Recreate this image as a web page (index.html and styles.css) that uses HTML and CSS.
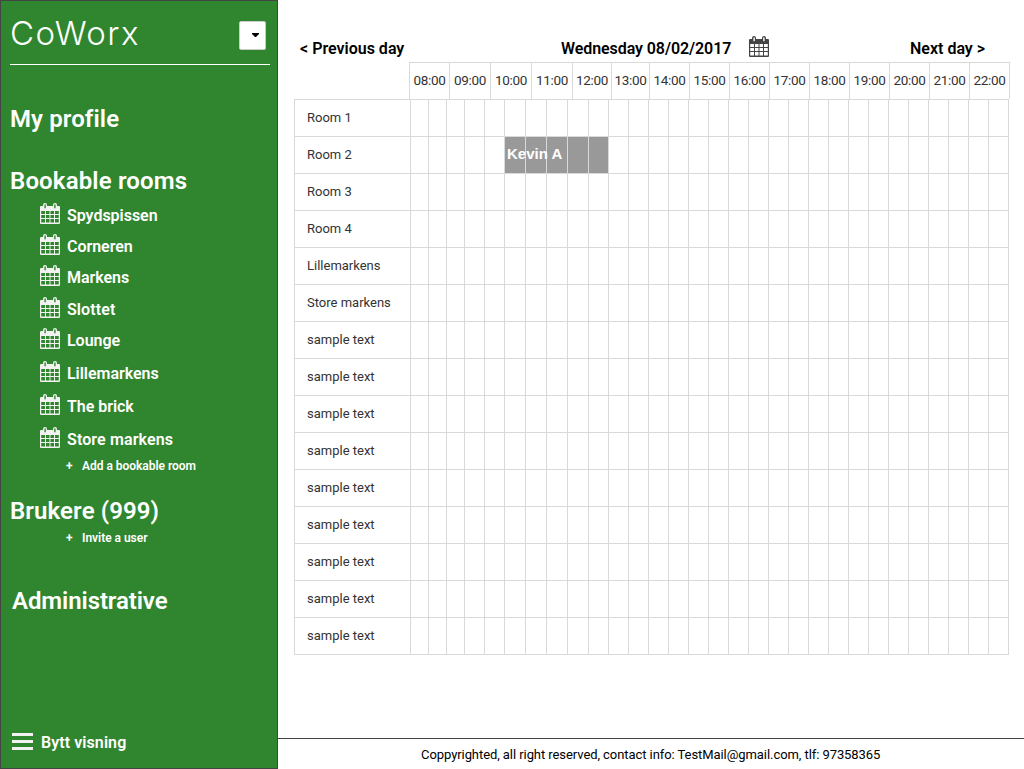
FILE: index.html
```html
<!DOCTYPE html>
<html lang="en">
<head>
<meta charset="utf-8">
<title>CoWorx</title>
<link rel="stylesheet" href="styles.css">
</head>
<body>
<svg class="sprite" aria-hidden="true">
  <symbol id="calendar" viewBox="0 0 20 21">
    <path fill="currentColor" fill-rule="evenodd" d="M1 3H3V2Q3 0 5 0T7 2V3H13V2Q13 0 15 0T17 2V3H19Q20 3 20 4V20Q20 21 19 21H1Q0 21 0 20V4Q0 3 1 3ZM4.4 2V5.2H5.8V2Q5.8 1.2 5.1 1.2T4.4 2ZM14.2 2V5.2H15.6V2Q15.6 1.2 14.9 1.2T14.2 2ZM1.2 8V11H5V8ZM6 8V11H9.5V8ZM10.5 8V11H14V8ZM15 8V11H18.8V8ZM1.2 12V15H5V12ZM6 12V15H9.5V12ZM10.5 12V15H14V12ZM15 12V15H18.8V12ZM1.2 16V19.6H5V16ZM6 16V19.6H9.5V16ZM10.5 16V19.6H14V16ZM15 16V19.6H18.8V16Z"/>
  </symbol>
</svg>
<div class="app">
  <aside class="sidebar">
    <header class="brand">
      <div class="logo">CoWorx</div>
      <button class="dropdown" aria-label="Open menu"><svg width="7" height="4" viewBox="0 0 7 4"><path d="M0 0H7V1L4 4H3L0 1Z"/></svg></button>
    </header>
    <h2 class="heading profile">My profile</h2>
    <h2 class="heading rooms-heading">Bookable rooms</h2>
    <ul class="rooms">
      <li><svg class="cal"><use href="#calendar"/></svg><span>Spydspissen</span></li>
      <li><svg class="cal"><use href="#calendar"/></svg><span>Corneren</span></li>
      <li><svg class="cal"><use href="#calendar"/></svg><span>Markens</span></li>
      <li class="gap"><svg class="cal"><use href="#calendar"/></svg><span>Slottet</span></li>
      <li><svg class="cal"><use href="#calendar"/></svg><span>Lounge</span></li>
      <li class="wide"><svg class="cal"><use href="#calendar"/></svg><span>Lillemarkens</span></li>
      <li class="wide"><svg class="cal"><use href="#calendar"/></svg><span>The brick</span></li>
      <li class="wide last"><svg class="cal"><use href="#calendar"/></svg><span>Store markens</span></li>
    </ul>
    <div class="add"><span class="plus">+</span>Add a bookable room</div>
    <h2 class="heading users">Brukere (999)</h2>
    <div class="add invite"><span class="plus">+</span>Invite a user</div>
    <h2 class="heading admin">Administrative</h2>
    <div class="switch">
      <svg width="21" height="17" viewBox="0 0 21 17"><path fill="#f2f2f2" d="M0 0H21V3H0ZM0 7H21V10H0ZM0 14H21V17H0Z"/></svg>
      <span>Bytt visning</span>
    </div>
  </aside>
  <div class="page">
    <main class="content">
      <nav class="days">
        <span class="prev">&lt; Previous day</span>
        <span class="date">Wednesday 08/02/2017</span>
        <svg class="cal dark"><use href="#calendar"/></svg>
        <span class="next">Next day &gt;</span>
      </nav>
      <div class="hours" id="hours"></div>
      <div class="schedule" id="schedule"></div>
    </main>
    <footer class="footer"><span>Coppyrighted, all right reserved, contact info: TestMail@gmail.com, tlf: 97358365</span></footer>
  </div>
</div>
<script src="app.js"></script>
</body>
</html>
```
FILE: app.js
```js
const rooms = ["Room 1", "Room 2", "Room 3", "Room 4", "Lillemarkens", "Store markens"]
  .concat(Array(9).fill("sample text"));
const booking = { room: 1, from: 5, to: 9, name: "Kevin A" };

const make = (parent, className, text = "") => {
  const el = document.createElement("div");
  el.className = className;
  el.textContent = text;
  parent.append(el);
  return el;
};

const hours = document.getElementById("hours");
for (let h = 8; h <= 22; h++) {
  make(hours, "hour", String(h).padStart(2, "0") + ":00");
}

const schedule = document.getElementById("schedule");
rooms.forEach((name, r) => {
  const row = make(schedule, "row");
  make(row, "room", name);
  for (let s = 0; s < 30; s++) {
    const booked = r === booking.room && s >= booking.from && s <= booking.to;
    const slot = make(row, booked ? "slot booked" : "slot");
    if (booked && s === booking.from) {
      make(slot, "booking-name", booking.name);
    }
  }
});
```
FILE: styles.css
```css
* { box-sizing: border-box; }
body { margin: 0; background: #fff; color: #000; font-family: Roboto, "Liberation Sans", sans-serif; }
.sprite { position: absolute; width: 0; height: 0; }
.app { display: flex; width: 1024px; height: 769px; overflow: hidden; }

.sidebar { display: flex; flex-direction: column; width: 278px; height: 769px; padding: 0 7px 0 9px; background: #30862e; border: 1px solid #444; color: #fff; }
.brand { display: flex; justify-content: space-between; height: 64px; padding-right: 4px; border-bottom: 1px solid #fff; }
.logo { margin-top: 10px; font: 300 33px/44px Inter, sans-serif; letter-spacing: 1.4px; white-space: nowrap; }
.dropdown { display: flex; align-items: center; justify-content: center; width: 27px; height: 29px; margin-top: 20px; padding: 0 0 2px 5px; background: #fff; border: 1px solid #ccc; border-radius: 2px; }
.heading { margin: 0; font-size: 24px; font-weight: 600; line-height: 28px; letter-spacing: 0.1px; white-space: nowrap; }
.profile { margin-top: 40px; }
.rooms-heading { margin-top: 34px; letter-spacing: 0.15px; }
.rooms { margin: 3px 0 0; padding: 0 0 0 30px; list-style: none; }
.rooms li { display: flex; align-items: center; height: 31px; font-size: 16px; font-weight: 600; letter-spacing: -0.03px; }
.rooms li span { margin: 3px 0 0 7px; }
.rooms .gap { height: 32px; padding-top: 1px; letter-spacing: 0.1px; }
.rooms .wide { height: 33px; padding-top: 2px; }
.rooms .last { letter-spacing: 0.12px; }
.cal { display: block; flex: none; width: 20px; height: 21px; color: #f2f2f2; }
.add { display: flex; height: 16px; margin: 5px 0 0 56px; font-size: 12px; font-weight: 600; line-height: 16px; letter-spacing: -0.03px; }
.plus { width: 16px; }
.users { margin-top: 23px; }
.invite { margin-top: 5px; }
.admin { margin: 41px 0 0 2px; letter-spacing: -0.1px; }
.switch { display: flex; align-items: center; gap: 8px; height: 24px; margin: auto 0 15px 2px; font-size: 16px; font-weight: 600; letter-spacing: 0.08px; }
.switch span { margin-top: 2px; }

.page { display: flex; flex: 1; flex-direction: column; }
.content { flex: 1; padding: 34px 0 0 16px; }
.days { display: flex; align-items: center; height: 28px; padding-left: 6px; font-size: 16px; font-weight: 600; white-space: nowrap; }
.prev { width: 261px; }
.date { width: 188px; letter-spacing: -0.08px; }
.days .dark { margin-bottom: 4px; color: #444; }
.next { margin-left: 141px; }
.hours { display: grid; grid-template-columns: 40px 41px 41px 41px 39px 38px repeat(9, 40px); width: 601px; height: 37px; margin-left: 115px; border: solid #d9d9d9; border-width: 1px 1px 0 0; }
.hour { border-left: 1px solid #d9d9d9; color: #333; font-size: 13.5px; line-height: 35px; text-align: center; letter-spacing: -0.35px; }
.schedule { width: 715px; border-right: 1px solid #d9d9d9; border-bottom: 1px solid #d9d9d9; }
.row { display: grid; grid-template-columns: 116px repeat(3, 18px) repeat(2, 20px) repeat(4, 21px) repeat(21, 20px); width: 714px; height: 37px; }
.room, .slot { border: solid #d9d9d9; border-width: 1px 0 0 1px; }
.room { padding-left: 12px; color: #333; font-size: 13px; line-height: 35px; }
.booked { background: #999; }
.booking-name { position: relative; width: 60px; padding-left: 2px; color: #fff; font: bold 15px/33px "Liberation Sans", sans-serif; }
.footer { height: 31px; border-top: 1px solid #444; padding-left: 143px; font-size: 13px; line-height: 32px; letter-spacing: -0.07px; white-space: nowrap; }
```
